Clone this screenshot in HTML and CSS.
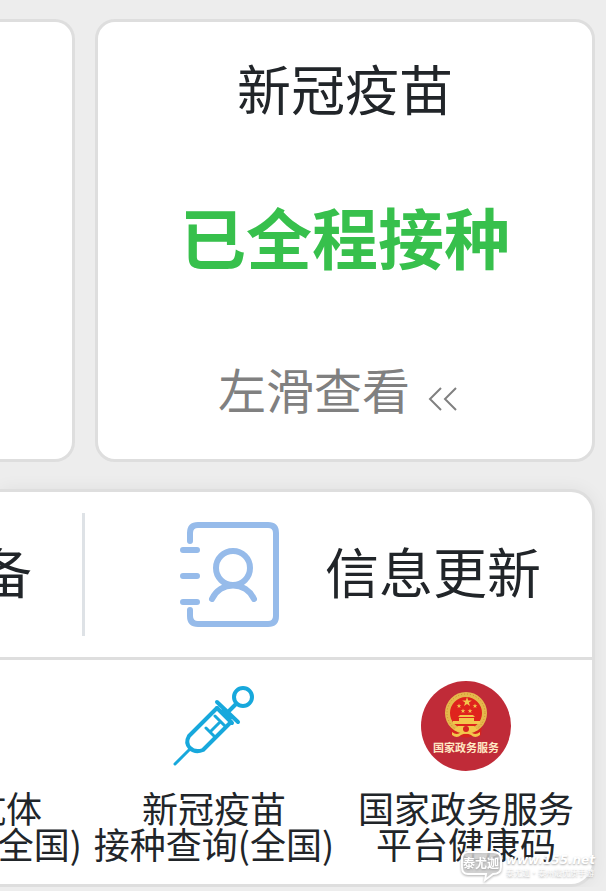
FILE: index.html
```html
<!DOCTYPE html>
<html lang="zh-CN">
<head>
<meta charset="utf-8">
<meta name="viewport" content="width=device-width, initial-scale=1">
<title>健康码</title>
<link rel="stylesheet" href="styles.css">
</head>
<body>
<main>
  <div class="cards">
    <section class="card card-prev"></section>
    <section class="card card-main">
      <h2 class="title">新冠疫苗</h2>
      <strong class="status">已全程接种</strong>
      <p class="hint">左滑查看
        <svg class="chevrons" viewBox="0 0 30 24" aria-hidden="true"><path d="M13 1 2 12l11 11M28 1 17 12l11 11"/></svg>
      </p>
    </section>
  </div>
  <section class="panel">
    <div class="actions">
      <a class="action action-prev" href="#"><span>备</span></a>
      <a class="action action-update" href="#">
        <svg class="contact" viewBox="0 0 100 106" aria-hidden="true">
          <path d="M10 19v-8q0-8 8-8h70q8 0 8 8v83q0 8-8 8H18q-8 0-8-8v-6M3 28h14M3 54h14M3 80h14"/>
          <circle cx="53" cy="46" r="17"/>
          <path d="M32 77a23 23 0 0 1 42 0"/>
        </svg>
        <span>信息更新</span>
      </a>
    </div>
    <nav class="services">
      <a class="service service-prev" href="#"><span class="short">抗体</span><span>(全国)</span></a>
      <a class="service" href="#">
        <svg class="icon" viewBox="0 0 90 90" aria-hidden="true">
          <g class="syringe">
            <circle cx="74" cy="16" r="9"/>
            <path d="M67 23 59 31M48 21l21 20M48 27l15 15"/>
            <path d="M48 27 20 55q-4 7 1 12t13 2L62 41"/>
            <path class="thin" d="M20 69 6 83M46 35l11 11M54 29l8 8M37 47l8 8M50 42l-9 9"/>
          </g>
        </svg>
        <span>新冠疫苗</span><span>接种查询(全国)</span>
      </a>
      <a class="service" href="#">
        <svg class="icon" viewBox="0 0 90 90" aria-hidden="true">
          <defs><path id="star" d="m0-5 1.200 3.400h3.600L1.900.600 3 4 0 2-3 4-1.900.600-4.800-1.600h3.600z"/></defs>
          <circle cx="45" cy="45" r="45" fill="#c02b38"/>
          <path d="M29 43 30 54q5 3 9 1 6 3 12 0 6 2 9-1l1-11z" fill="#d6231f"/>
          <circle cx="45" cy="32" r="18.500" fill="#df231d" stroke="#e5b84c" stroke-width="5"/>
          <circle cx="45" cy="32" r="19" fill="none" stroke="#c98b2b" stroke-width="1" stroke-dasharray="1 2"/>
          <g fill="#f3c64c">
            <use href="#star" transform="translate(46 21)"/>
            <use href="#star" transform="translate(38 25) scale(.5)"/>
            <use href="#star" transform="translate(54 25) scale(.5)"/>
            <use href="#star" transform="translate(42 30) scale(.5)"/>
            <use href="#star" transform="translate(49 30) scale(.5)"/>
            <path d="M39 34h13l2 2H37zM38 37h15v3H38zM32 40h27v3H32z"/>
            <path d="m33 49 4-4h16l4 4-5 2H38z"/>
            <path d="M31 51q5 4 9 0 5-3 10 0 4 4 9 0v3q-5 4-9 0-5-3-10 0-4 4-9 0z"/>
          </g>
          <circle cx="45" cy="48" r="3" fill="#d6231f"/>
          <text class="seal" x="45" y="71">国家政务服务</text>
        </svg>
        <span>国家政务服务</span><span>平台健康码</span>
      </a>
    </nav>
    <div class="watermark">
      <svg class="bubble" viewBox="0 0 44 32" aria-hidden="true">
        <path d="M8 2h25q8 0 8 7v8q0 7-8 7l-8 6 1-6H8q-6 0-6-7V9q0-7 6-7z"/>
        <text x="21" y="18">泰尤迦</text>
      </svg>
      <div class="mark-text"><b>www.155.net</b><span>泰尤迦·泰州最优质手游</span></div>
    </div>
  </section>
</main>
</body>
</html>
```
FILE: styles.css
```css
* { box-sizing: border-box; }
body {
  margin: 0;
  background: #ededed;
  color: #212529;
  font-family: "Noto Sans CJK SC", sans-serif;
  overflow: hidden;
}
main { padding-top: 19px; }
a { color: inherit; text-decoration: none; }
.cards {
  display: grid;
  grid-template-columns: 75px 1fr;
  gap: 20px;
  margin-right: 11px;
}
.card {
  background: #fff;
  border: 3px solid #dedede;
  border-radius: 20px;
}
.card-prev { border-left: 0; border-radius: 0 20px 20px 0; }
.card-main {
  display: flex;
  flex-direction: column;
  align-items: center;
  padding: 26px 0 32px;
}
.title { margin: 0; font-size: 54px; line-height: 80px; font-weight: 400; }
.status {
  margin-top: 60px;
  color: #37c04c;
  font-size: 66px;
  line-height: 94px;
  font-weight: 700;
}
.hint {
  display: flex;
  align-items: center;
  gap: 18px;
  margin: 68px 14px 0 0;
  color: #808080;
  font-size: 48px;
  line-height: 77px;
}
.chevrons {
  width: 30px;
  height: 24px;
  margin-top: 20px;
  fill: none;
  stroke: #808080;
  stroke-width: 2;
}
.panel {
  position: relative;
  margin: 27px 11px 0 0;
  background: #fff;
  border: 3px solid #dedede;
  border-left: 0;
  border-radius: 0 24px 24px 0;
  box-shadow: 0 0 18px rgba(0, 0, 0, .06);
}
.actions {
  display: grid;
  grid-template-columns: 85px 1fr;
  padding: 21px 0;
  border-bottom: 3px solid #dedede;
}
.action {
  display: flex;
  align-items: center;
  height: 123px;
  font-size: 54px;
  line-height: 80px;
}
.action span { padding-bottom: 8px; }
.action-prev { justify-content: flex-end; padding-right: 50px; border-right: 3px solid #dee2e6; }
.action-update { justify-content: flex-end; gap: 45px; padding-right: 51px; }
.contact {
  width: 100px;
  height: 106px;
  fill: none;
  stroke: #96bbea;
  stroke-width: 6;
  stroke-linecap: round;
}
.services {
  display: grid;
  grid-template-columns: 88px 1fr 1fr;
  padding: 21px 0 23px;
}
.service {
  display: flex;
  flex-direction: column;
  align-items: center;
  justify-content: flex-end;
  font-size: 36px;
  line-height: 36px;
  white-space: nowrap;
}
.service-prev { align-items: flex-end; padding-right: 6px; }
.short { margin-right: 40px; }
.icon { width: 90px; height: 90px; margin-bottom: 18px; }
.syringe { fill: none; stroke: #17a8dc; stroke-width: 4; stroke-linecap: round; stroke-linejoin: round; }
.thin { stroke-width: 3; }
.seal { font-size: 11px; font-weight: 700; fill: #ffe8c4; text-anchor: middle; }
.watermark {
  position: absolute;
  right: -3px;
  bottom: 2px;
  display: flex;
  align-items: center;
  gap: 2px;
  color: #fff;
  text-shadow: 0 1px 2px #aaa;
}
.bubble { width: 44px; height: 32px; fill: rgba(215, 215, 215, .6); stroke: #fff; stroke-width: 2; filter: drop-shadow(0 1px 1px #aaa); }
.bubble text { font-size: 12px; font-weight: 700; text-anchor: middle; fill: #fff; stroke: none; }
.mark-text { display: flex; flex-direction: column; font-size: 8px; line-height: 12px; }
.mark-text b { font: italic 700 12px/14px "DejaVu Sans", sans-serif; }
```
